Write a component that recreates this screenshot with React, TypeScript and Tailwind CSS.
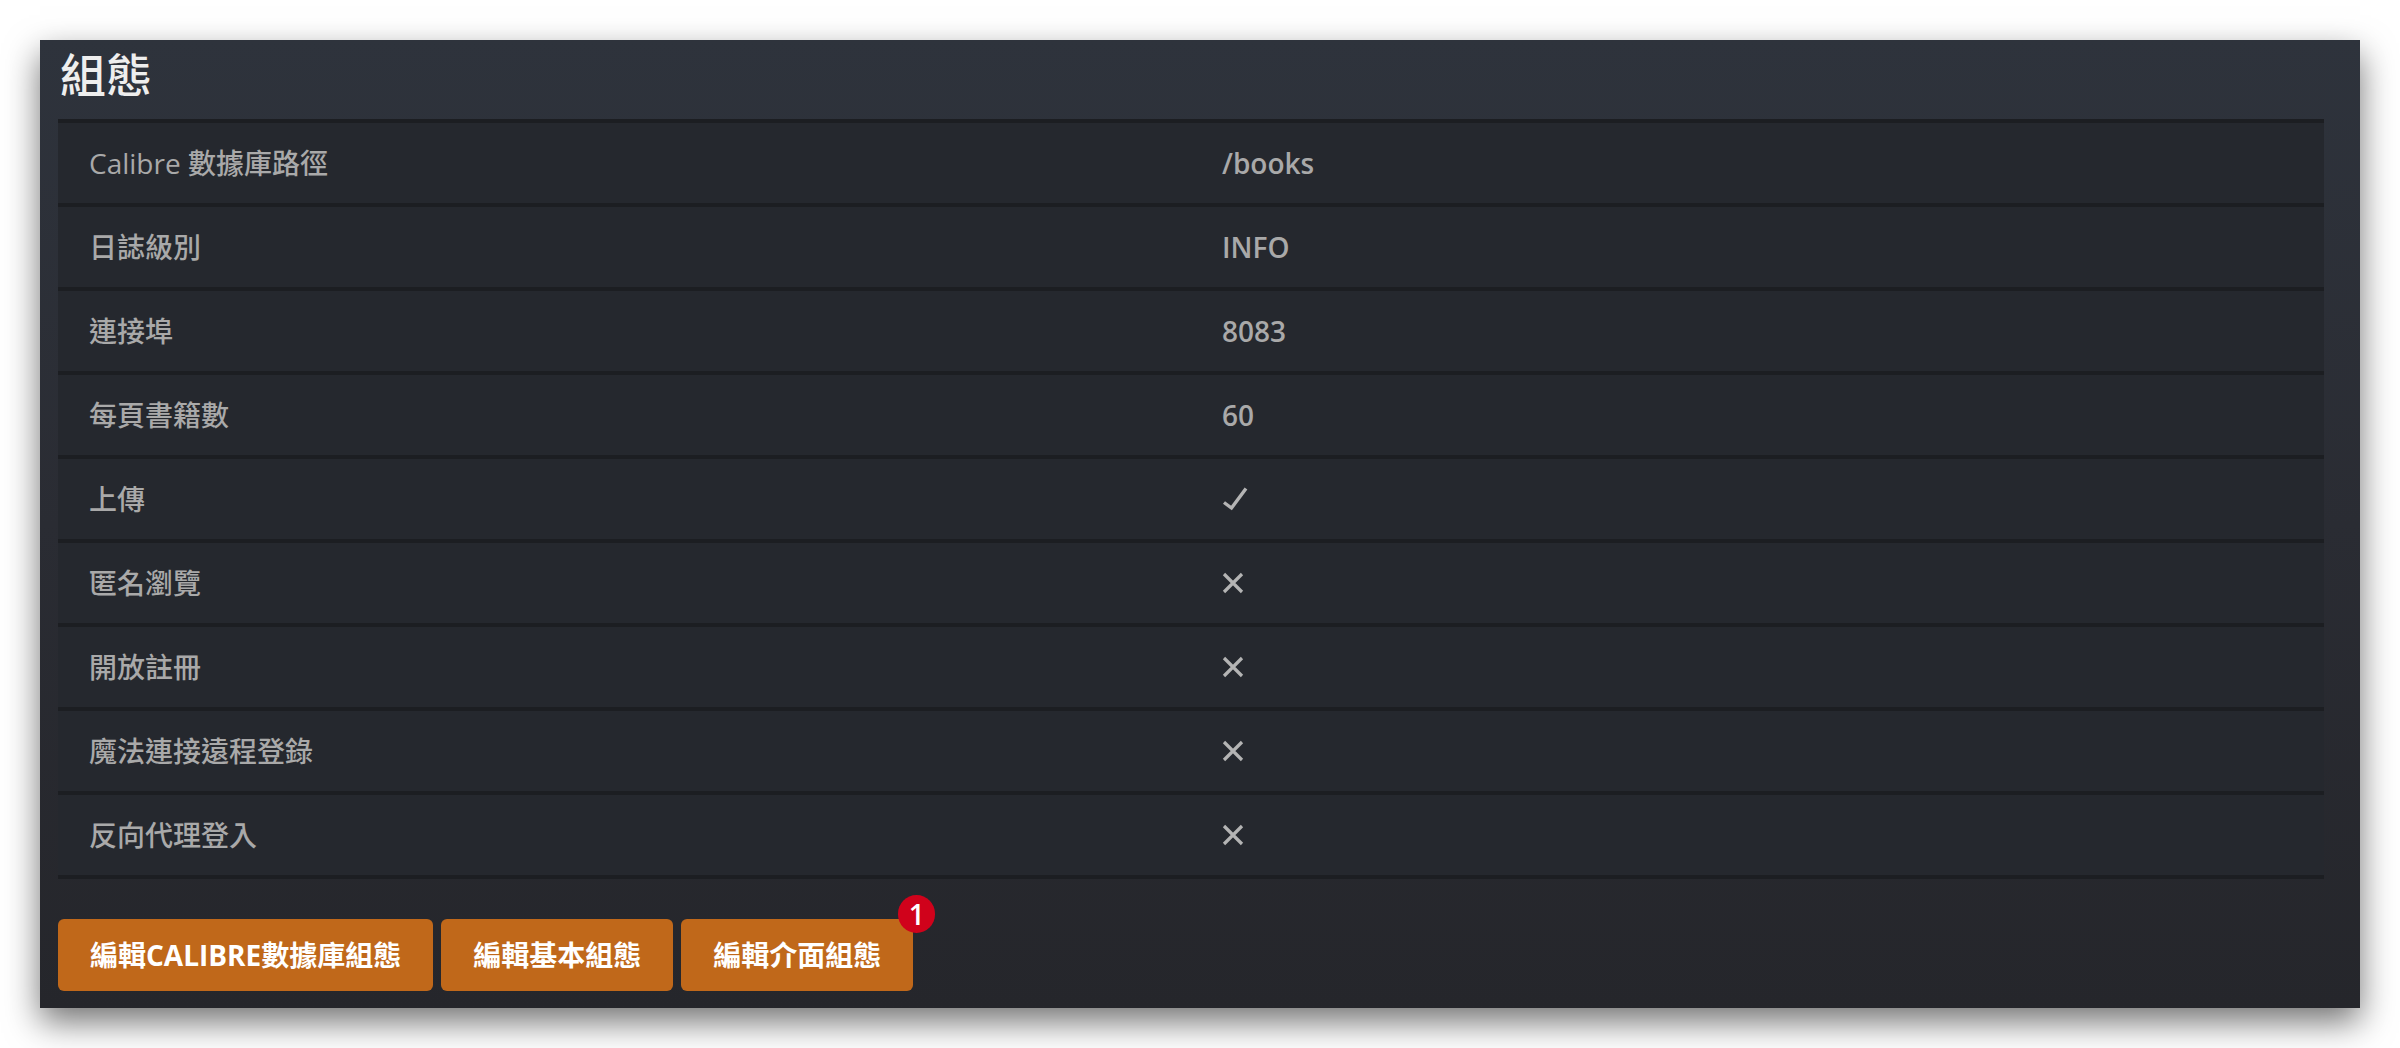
import React from 'react';

type Row = { label: string; value: string | boolean };

const rows: Row[] = [
  { label: 'Calibre 數據庫路徑', value: '/books' },
  { label: '日誌級別', value: 'INFO' },
  { label: '連接埠', value: '8083' },
  { label: '每頁書籍數', value: '60' },
  { label: '上傳', value: true },
  { label: '匿名瀏覽', value: false },
  { label: '開放註冊', value: false },
  { label: '魔法連接遠程登錄', value: false },
  { label: '反向代理登入', value: false },
];

function Check() {
  return (
    <svg width="26" height="24" viewBox="0 0 26 24" fill="none" className="text-[#b4b4b4]">
      <path d="M2 15.5 L9.5 21 L24 1.5" stroke="currentColor" strokeWidth="3.4" strokeLinejoin="miter" />
    </svg>
  );
}

function Cross() {
  return (
    <svg width="22" height="22" viewBox="0 0 22 22" fill="none" className="text-[#b4b4b4]">
      <path d="M2 2 L20 20 M20 2 L2 20" stroke="currentColor" strokeWidth="3.2" />
    </svg>
  );
}

export default function App() {
  const font = { fontFamily: '"Open Sans", "Noto Sans CJK TC", sans-serif' };

  return (
    <div className="min-h-screen bg-white p-[40px]" style={font}>
      <div className="bg-gradient-to-b from-[#2e333c] via-[#2a2c33] to-[#25262b] pl-[18px] pr-[36px] pb-[17px] shadow-[0_14px_32px_rgba(0,0,0,0.55)]">
        <h2 className="pl-[2px] text-[46px] leading-[68px] mb-[11px] text-[#eeeeee] font-medium">組態</h2>

        <div className="border-t-4 border-[#1c1e22] bg-[#25282e]">
          {rows.map((row) => (
            <div key={row.label} className="grid grid-cols-2 h-[84px] border-b-4 border-[#1c1e22]">
              <div className="flex items-center px-[31px] text-[28px] font-medium text-[#a9a9a9]">{row.label}</div>
              <div className="flex items-center px-[31px] text-[28px] font-semibold text-[#a9a9a9]">
                {typeof row.value === 'string' ? row.value : row.value ? <Check /> : <Cross />}
              </div>
            </div>
          ))}
        </div>

        <div className="flex gap-[8px] mt-[40px]">
          <button className="h-[72px] px-[32px] rounded-[6px] bg-[#c0681a] text-white text-[28px] font-bold">編輯CALIBRE數據庫組態</button>
          <button className="h-[72px] px-[32px] rounded-[6px] bg-[#c0681a] text-white text-[28px] font-bold">編輯基本組態</button>
          <div className="relative">
            <button className="h-[72px] px-[32px] rounded-[6px] bg-[#c0681a] text-white text-[28px] font-bold">編輯介面組態</button>
            <span className="absolute -top-[24px] -right-[22px] flex items-center justify-center w-[37px] h-[38px] rounded-full bg-[#d0021b] text-white text-[28px] font-semibold leading-none">1</span>
          </div>
        </div>
      </div>
    </div>
  );
}
